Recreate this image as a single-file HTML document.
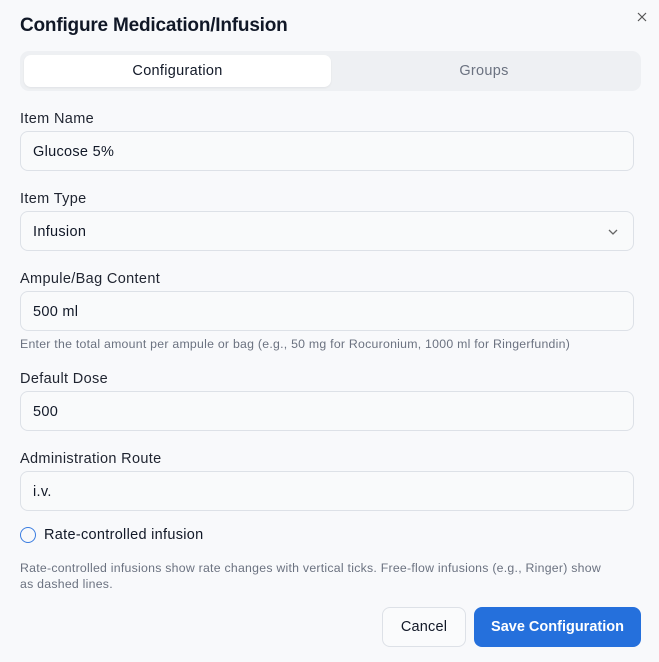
<!DOCTYPE html><html><head><style>
*{box-sizing:border-box;margin:0;padding:0}
body{width:659px;height:662px;background:#f8f9fb;font-family:"Liberation Sans",sans-serif;color:#111827;position:relative;overflow:hidden}
.a{position:absolute}
.lbl{position:absolute;left:20px;font-size:14.5px;letter-spacing:0.35px;color:#1f2430}
.in{position:absolute;left:20px;width:614px;height:40px;border:1px solid #dde1e7;border-radius:8px;background:#f9fafb;font-size:14.5px;letter-spacing:0.3px;padding:0 12px;line-height:40px;color:#111827}
.help{position:absolute;left:20px;font-size:12.3px;letter-spacing:0.25px;color:#6b7280;line-height:16px}
</style></head><body>
<div class="a" style="left:20px;top:15px;font-size:19px;font-weight:bold;letter-spacing:-0.2px">Configure Medication/Infusion</div>
<svg class="a" style="left:637px;top:12px" width="10" height="10" viewBox="0 0 10 10"><path d="M1 1l8 8M9 1l-8 8" stroke="#555" stroke-width="1.2"/></svg>
<div class="a" style="left:20px;top:51px;width:621px;height:40px;background:#eef0f3;border-radius:9px"></div>
<div class="a" style="left:24px;top:55px;width:307px;height:32px;background:#fff;border-radius:7px;box-shadow:0 1px 2px rgba(0,0,0,.06);text-align:center;line-height:33px;font-size:14.5px;letter-spacing:0.3px">Configuration</div>
<div class="a" style="left:331px;top:55px;width:306px;height:32px;text-align:center;line-height:33px;font-size:14.5px;letter-spacing:0.3px;color:#6b7280">Groups</div>
<div class="lbl" style="top:111px">Item Name</div>
<div class="in" style="top:131px">Glucose 5%</div>
<div class="lbl" style="top:191px">Item Type</div>
<div class="in" style="top:211px">Infusion<svg class="a" style="right:14px;top:15px" width="12" height="10" viewBox="0 0 12 10"><path d="M2 3l4 4 4-4" fill="none" stroke="#666" stroke-width="1.3"/></svg></div>
<div class="lbl" style="top:271px">Ampule/Bag Content</div>
<div class="in" style="top:291px">500 ml</div>
<div class="help" style="top:336px">Enter the total amount per ampule or bag (e.g., 50 mg for Rocuronium, 1000 ml for Ringerfundin)</div>
<div class="lbl" style="top:371px">Default Dose</div>
<div class="in" style="top:391px">500</div>
<div class="lbl" style="top:451px">Administration Route</div>
<div class="in" style="top:471px">i.v.</div>
<div class="a" style="left:20px;top:527px;width:16px;height:16px;border:1.5px solid #3b7de0;border-radius:50%"></div>
<div class="a" style="left:44px;top:527px;font-size:14.5px;letter-spacing:0.3px">Rate-controlled infusion</div>
<div class="help" style="top:560px;width:598px">Rate-controlled infusions show rate changes with vertical ticks. Free-flow infusions (e.g., Ringer) show as dashed lines.</div>
<div class="a" style="left:382px;top:607px;width:84px;height:40px;border:1px solid #dde1e7;border-radius:8px;background:#fafbfc;text-align:center;line-height:39px;font-size:14.5px;letter-spacing:0.2px">Cancel</div>
<div class="a" style="left:474px;top:607px;width:167px;height:40px;border-radius:8px;background:#2570dc;color:#fff;text-align:center;line-height:41px;font-size:14.5px;font-weight:bold">Save Configuration</div>
</body></html>
